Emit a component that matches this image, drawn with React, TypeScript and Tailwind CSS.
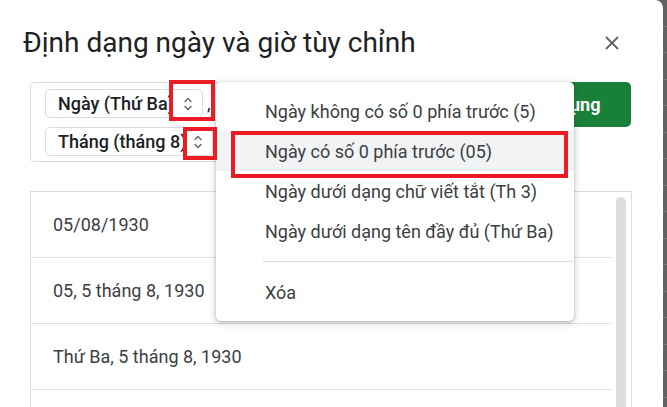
import React from "react";

const Chev = () => (
  <svg width="8" height="14" viewBox="0 0 8 14" fill="none" stroke="#5f6368" strokeWidth="1.4" strokeLinecap="round" strokeLinejoin="round">
    <path d="M1 4.5 L4 1.5 L7 4.5" />
    <path d="M1 9.5 L4 12.5 L7 9.5" />
  </svg>
);

const rows = ["05/08/1930", "05, 5 tháng 8, 1930", "Thứ Ba, 5 tháng 8, 1930", ""];

const menuItems = [
  "Ngày không có số 0 phía trước (5)",
  "Ngày có số 0 phía trước (05)",
  "Ngày dưới dạng chữ viết tắt (Th 3)",
  "Ngày dưới dạng tên đầy đủ (Thứ Ba)",
];

export default function App() {
  return (
    <div
      className="w-[667px] h-[407px] overflow-hidden relative flex bg-[#616161]"
      style={{ fontFamily: "Roboto, 'Noto Sans', sans-serif" }}
    >
      {/* Dialog */}
      <div className="w-[663px] h-[460px] shrink-0 bg-white rounded-tr-[8px] flex flex-col pt-[25px]">
        <div className="flex items-center h-[36px] pl-[23px] pr-[44px]">
          <h1 className="flex-1 text-[28px] leading-[36px] text-[#202124] font-normal">
            Định dạng ngày và giờ tùy chỉnh
          </h1>
          <svg width="14" height="14" viewBox="0 0 14 14" stroke="#5f6368" strokeWidth="1.8">
            <path d="M1 1 L13 13 M13 1 L1 13" />
          </svg>
        </div>

        <div className="flex items-start mt-[21px] pl-[30px] pr-[32px] gap-[16px]">
          <div className="flex-1 h-[80px] border border-[#dadce0] rounded-[4px] pt-[6px] pl-[14px] flex flex-col gap-[9px]">
            <div className="flex items-end">
              <div className="w-[158px] h-[29px] border border-[#dadce0] rounded-[5px] flex items-center pl-[12px] pr-[10px]">
                <span className="w-[120px] overflow-hidden whitespace-nowrap text-[18px] font-medium text-[#202124] leading-[24px]">
                  Ngày (Thứ Ba)
                </span>
                <span className="ml-auto flex">
                  <Chev />
                </span>
              </div>
              <span className="ml-[4px] text-[18px] leading-[24px] text-[#202124] mb-[2px]">,</span>
            </div>
            <div className="w-[168px] h-[29px] border border-[#dadce0] rounded-[5px] flex items-center pl-[12px] pr-[10px]">
              <span className="w-[130px] overflow-hidden whitespace-nowrap text-[18px] font-medium text-[#202124] leading-[24px]">
                Tháng (tháng 8)
              </span>
              <span className="ml-auto flex">
                <Chev />
              </span>
            </div>
          </div>
          <button className="w-[128px] h-[45px] rounded-[5px] bg-[#188038] text-white text-[18px] font-bold flex items-center justify-center">
            Áp dụng
          </button>
        </div>

        <div className="mt-[29px] ml-[30px] mr-[31px] flex-1 border border-[#dadce0] border-b-0 flex">
          <div className="w-[580px] flex flex-col">
            {rows.map((r, i) => (
              <div
                key={i}
                className="h-[66px] shrink-0 border-b border-[#e0e0e0] flex items-center pl-[22px] text-[18px] text-[#3c4043]"
              >
                {r}
              </div>
            ))}
          </div>
          <div className="flex-1 pt-[5px] flex justify-center">
            <div className="w-[10px] h-full rounded-t-full bg-[#dadce0]" />
          </div>
        </div>
      </div>

      {/* background sheet strip */}
      <div className="flex-1 flex flex-col">
        {Array.from({ length: 16 }).map((_, i) => (
          <div key={i} className="h-[26.5px] shrink-0 border-b border-[#7a7a7a]" />
        ))}
      </div>

      {/* Dropdown menu */}
      <div className="absolute left-[216px] top-[82px] w-[358px] h-[239px] bg-white rounded-[5px] shadow-[0_2px_6px_2px_rgba(60,64,67,0.15),0_1px_3px_rgba(60,64,67,0.3)] pt-[9px] flex flex-col">
        {menuItems.map((m, i) => (
          <div
            key={i}
            className={`h-[40px] shrink-0 flex items-center pl-[49px] text-[18px] text-[#3c4043] ${i === 1 ? "bg-[#f1f3f4]" : ""}`}
          >
            {m}
          </div>
        ))}
        <div className="mt-[10px] ml-[47px] h-px bg-[#dadce0]" />
        <div className="mt-[10px] h-[40px] flex items-center pl-[49px] text-[18px] text-[#3c4043]">Xóa</div>
      </div>

      {/* Red annotation boxes */}
      <div className="absolute left-[169px] top-[80px] w-[46px] h-[41px] border-[4px] border-[#ec1c24]" />
      <div className="absolute left-[183px] top-[127px] w-[34px] h-[33px] border-[4px] border-[#ec1c24]" />
      <div className="absolute left-[231px] top-[131px] w-[337px] h-[47px] border-[4px] border-[#ec1c24]" />
    </div>
  );
}
